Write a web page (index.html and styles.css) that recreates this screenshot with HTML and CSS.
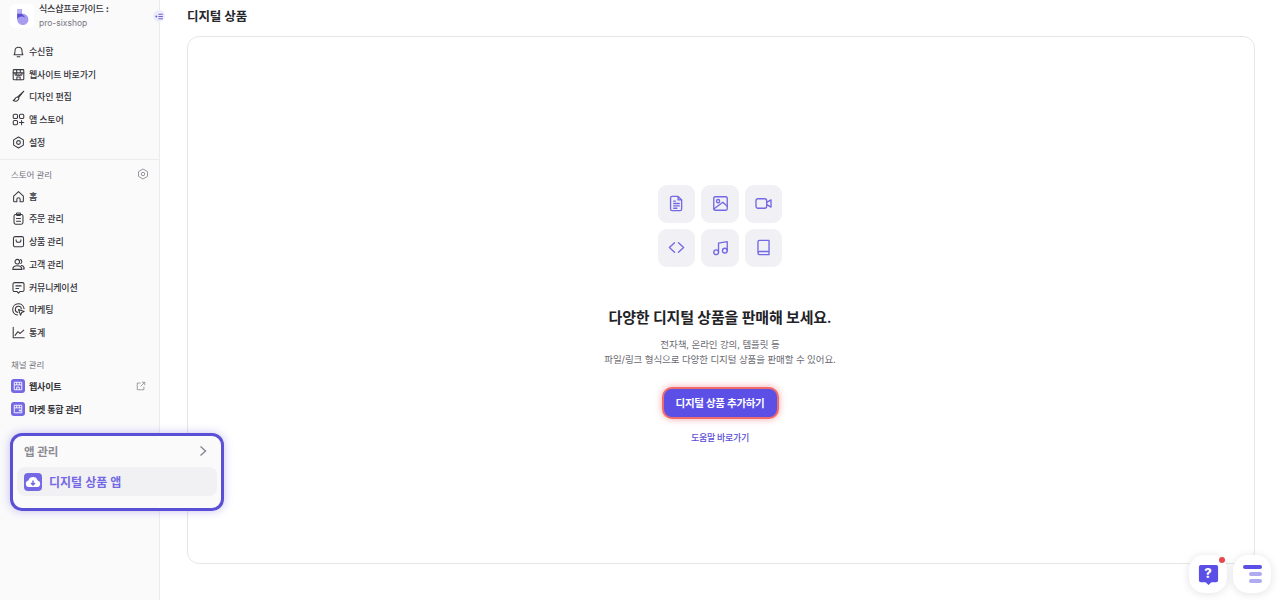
FILE: index.html
```html
<!DOCTYPE html>
<html lang="ko">
<head>
<meta charset="utf-8">
<title>디지털 상품</title>
<link rel="stylesheet" href="styles.css">
</head>
<body>
<div class="app">
  <aside class="sidebar">
    <div class="account">
      <div class="logo">
        <svg viewBox="0 0 16 16" width="17" height="17"><path d="M3 1h4.500v4.500a5.300 5.300 0 1 1-4.500 5z" fill="#a79cf0"/><path d="M3 1h4v4.500H3z" fill="#b9b2f3"/><path d="M3 5.500h4.500L11 9.500a5.300 5.300 0 0 0-8 .8z" fill="#5b4fd6"/></svg>
      </div>
      <div class="account-text">
        <div class="account-name">식스샵프로가이드 <span class="dots">:</span></div>
        <div class="account-id">pro-sixshop</div>
      </div>
      <span class="collapse">
        <svg viewBox="0 0 12 12" width="9" height="9"><path d="M4.500 3h6M4.500 6h6M4.500 9h6" stroke="#5b4fd6" stroke-width="1.200" fill="none"/><circle cx="1.800" cy="6" r="1.200" fill="#5b4fd6"/></svg>
      </span>
    </div>

    <nav class="nav nav-top">
      <a class="item"><svg class="ico" viewBox="0 0 16 16"><path d="M2.500 12c1-1 1.200-3 1.200-5a4.300 4.300 0 0 1 8.600 0c0 2 .2 4 1.200 5zM6.300 14.500h3.400"/></svg>수신함</a>
      <a class="item"><svg class="ico" viewBox="0 0 16 16"><rect x="1.500" y="2" width="13" height="12.500" rx="1"/><path d="M1.500 6h13M5.800 2v4M10.200 2v4M3.800 6v2a1 1 0 0 0 2 0V6M5.800 8a1 1 0 0 0 2.200 0 1 1 0 0 0 2.200 0M10.200 8a1 1 0 0 0 2 0V6M6 14.500v-3.500h4v3.500"/></svg>웹사이트 바로가기</a>
      <a class="item"><svg class="ico" viewBox="0 0 16 16"><path d="M14.500 1.500 7 8.500 8 9.500zM6.500 8.500c-2.500 0-2 3-5 4.500 3 1.500 6.500 1 7-3z"/></svg>디자인 편집</a>
      <a class="item"><svg class="ico" viewBox="0 0 16 16"><rect x="1.500" y="1.500" width="5.300" height="5.300" rx="1.500"/><rect x="9.200" y="1.500" width="5.300" height="5.300" rx="1.500"/><rect x="1.500" y="9.200" width="5.300" height="5.300" rx="1.500"/><path d="M11.800 9.200v5.300M9.200 11.800h5.300"/></svg>앱 스토어</a>
      <a class="item"><svg class="ico" viewBox="0 0 16 16"><path d="M8 1.300 14 4.800v6.400l-6 3.500-6-3.500V4.800z"/><circle cx="8" cy="8" r="2.300"/></svg>설정</a>
    </nav>

    <div class="section-head">
      <span>스토어 관리</span>
      <svg class="gear" viewBox="0 0 16 16"><path d="M8 1.300 14 4.800v6.400l-6 3.500-6-3.500V4.800z"/><circle cx="8" cy="8" r="2.300"/></svg>
    </div>
    <nav class="nav">
      <a class="item"><svg class="ico" viewBox="0 0 16 16"><path d="M2 7.500 8 2l6 5.500v6a1 1 0 0 1-1 1h-3v-3a2 2 0 0 0-4 0v3H3a1 1 0 0 1-1-1z"/></svg>홈</a>
      <a class="item"><svg class="ico" viewBox="0 0 16 16"><rect x="2.500" y="3" width="11" height="12" rx="2"/><rect x="5.500" y="1.200" width="5" height="3.200" rx="1"/><path d="M5.500 8h5M5.500 11.500h5"/></svg>주문 관리</a>
      <a class="item"><svg class="ico" viewBox="0 0 16 16"><rect x="1.800" y="2" width="12.400" height="12.500" rx="2"/><path d="M5 6c0 4 6 4 6 0"/></svg>상품 관리</a>
      <a class="item"><svg class="ico" viewBox="0 0 16 16"><circle cx="6.500" cy="4.500" r="2.800"/><path d="M1 14c0-1 0-4.500 5.500-4.500S12 13 12 14zM10.500 2c2 .3 2 4 .3 4.800M11.500 9.300c2 .2 3.500 1.700 3.500 4.200h-1.500"/></svg>고객 관리</a>
      <a class="item"><svg class="ico" viewBox="0 0 16 16"><path d="M3 2h10a1.800 1.800 0 0 1 1.800 1.800v7.400A1.800 1.800 0 0 1 13 13H9.800L8 15l-1.800-2H3a1.800 1.800 0 0 1-1.800-1.800V3.800A1.800 1.800 0 0 1 3 2zM4.800 6h6.400M4.800 9.300h3.400"/></svg>커뮤니케이션</a>
      <a class="item"><svg class="ico" viewBox="0 0 16 16"><path d="M14.800 7A7 7 0 1 0 7 14.800M11.600 7.200a3.800 3.800 0 1 0-4.400 4.400M8 8l7 2.400-3 1.400L10.500 15z"/></svg>마케팅</a>
      <a class="item"><svg class="ico" viewBox="0 0 16 16"><path d="M1.500 1.500v13H15M3.800 11.500l3.400-4.500 2.800 2.200L14.500 5"/></svg>통계</a>
    </nav>

    <div class="section-head channel"><span>채널 관리</span></div>
    <nav class="nav">
      <a class="item chan"><span class="chan-ico"><svg viewBox="0 0 16 16"><path d="M3 3h10v10H3zM3 6.500h10M6.300 3v3.500M9.700 3v3.500M6.300 13V9.500h3.400V13"/></svg></span>웹사이트<svg class="ext" viewBox="0 0 12 12"><path d="M9.500 6.800V10.500h-8v-8h3.800M7 1.500h3.500V5M10.500 1.500 5.500 6.500"/></svg></a>
      <a class="item chan"><span class="chan-ico"><svg viewBox="0 0 16 16"><path d="M3 3h10v10H3zM3 6.500h10M6.300 3v3.500M9.700 3v3.500M10.500 8.500v3M9 10h3"/></svg></span>마켓 통합 관리</a>
    </nav>

    <div class="app-popup">
      <div class="popup-head"><span>앱 관리</span><svg viewBox="0 0 12 12" width="12" height="12"><path d="M3.500 1.500 8.500 6l-5 4.500" fill="none" stroke="#8b8b93" stroke-width="1.500"/></svg></div>
      <div class="popup-item">
        <span class="cloud"><svg viewBox="0 0 18 18" width="18" height="18"><path d="M4.800 14a3.300 3.300 0 0 1-.4-6.500 4.800 4.800 0 0 1 9.200 0 3.300 3.300 0 0 1-.4 6.500z" fill="#fff"/><path d="M9 7.500v4M7 10l2 2 2-2" fill="none" stroke="#7468e4" stroke-width="1.500"/></svg></span>
        <span>디지털 상품 앱</span>
      </div>
    </div>
  </aside>

  <main class="main">
    <h1 class="title">디지털 상품</h1>
    <section class="card">
      <div class="tiles">
        <div class="tile"><svg viewBox="0 0 24 24"><path d="M6.500 3h7.500l4.500 4.500V19a2 2 0 0 1-2 2h-10a2 2 0 0 1-2-2V5a2 2 0 0 1 2-2zM14 3v4.500h4.500M8.500 12h7M8.500 15h7M8.500 18h4M8.500 9h2"/></svg></div>
        <div class="tile"><svg viewBox="0 0 24 24"><rect x="3.500" y="3.500" width="17" height="17" rx="2"/><circle cx="9" cy="9" r="2"/><path d="M3.500 19 15 10.500l5.500 5"/></svg></div>
        <div class="tile"><svg viewBox="0 0 24 24"><rect x="2.500" y="6" width="13.500" height="12" rx="2.500"/><path d="m16 10.500 5.500-3v9L16 13.500"/></svg></div>
        <div class="tile"><svg viewBox="0 0 24 24"><path d="M9.500 6 3 12l6.500 6M14.500 6 21 12l-6.500 6"/></svg></div>
        <div class="tile"><svg viewBox="0 0 24 24"><circle cx="6.500" cy="18" r="3"/><circle cx="17.500" cy="16" r="3"/><path d="M9.500 18V6.500l11-2V16"/></svg></div>
        <div class="tile"><svg viewBox="0 0 24 24"><path d="M5 18V5a2 2 0 0 1 2-2h12v18H7a2 2 0 0 1-2-2 2 2 0 0 1 2-2h12"/></svg></div>
      </div>
      <h2 class="headline">다양한 디지털 상품을 판매해 보세요.</h2>
      <p class="desc">전자책, 온라인 강의, 템플릿 등<br>파일/링크 형식으로 다양한 디지털 상품을 판매할 수 있어요.</p>
      <button class="cta">디지털 상품 추가하기</button>
      <a class="help">도움말 바로가기</a>
    </section>
  </main>

  <div class="floats">
    <div class="fab">
      <i class="dot"></i>
      <svg class="bubble" viewBox="0 0 24 24" width="23" height="23"><path d="M4 2h16a2 2 0 0 1 2 2v14a2 2 0 0 1-2 2h-5l-3 3-3-3H4a2 2 0 0 1-2-2V4a2 2 0 0 1 2-2z" fill="#5b4fe6"/></svg>
      <span class="q">?</span>
    </div>
    <div class="fab lines"><i class="l1"></i><i class="l2"></i><i class="l3"></i></div>
  </div>
</div>
</body>
</html>
```
FILE: styles.css
```css
* { box-sizing: border-box; }
html, body { margin: 0; height: 100%; }
body {
  font-family: Inter, "Noto Sans CJK KR", "Noto Sans", sans-serif;
  color: #26262b;
  background: #fff;
  overflow: hidden;
}
.app { position: relative; display: flex; width: 1280px; height: 600px; overflow: hidden; }

.sidebar {
  position: relative;
  width: 160px;
  flex: none;
  height: 600px;
  background: #fafafb;
  border-right: 1px solid #ececf0;
  padding-top: 3px;
}
.account { display: flex; align-items: center; height: 26px; padding-left: 10px; }
.logo {
  width: 24px; height: 24px; border-radius: 5px; background: #fff;
  display: flex; align-items: center; justify-content: center; flex: none;
}
.account-text { margin-left: 5px; width: 115px; }
.account-name { font-size: 9px; font-weight: 500; letter-spacing: -.2px; line-height: 12px; color: #33333a; white-space: nowrap; }
.dots { font-weight: 800; }
.account-id { font-size: 8.500px; line-height: 14px; margin-top: 1px; color: #77777f; }
.collapse {
  width: 12px; height: 12px; border-radius: 50%; background: #ededfa;
  position: relative; left: 6px; z-index: 1;
  display: flex; align-items: center; justify-content: center; flex: none;
}
.nav { display: flex; flex-direction: column; }
.nav-top { margin-top: 11px; padding-bottom: 5px; border-bottom: 1px solid #ececf0; }
.item {
  display: flex; align-items: center; height: 22.750px; padding-left: 11.500px;
  font-size: 9px; letter-spacing: -.2px; font-weight: 500; color: #33333a; white-space: nowrap;
}
.ico {
  width: 13px; height: 13px; margin-right: 4.500px; flex: none;
  fill: none; stroke: #3a3a40; stroke-width: 1.300; stroke-linejoin: round; stroke-linecap: round;
}
.section-head {
  display: flex; align-items: center; justify-content: space-between;
  height: 18px; margin-top: 5px; margin-bottom: 2px; padding: 0 10px 0 11px;
  font-size: 8.500px; letter-spacing: -.1px; color: #70707a;
}
.gear { width: 12px; height: 12px; fill: none; stroke: #8b8b93; stroke-width: 1.200; }
.channel { margin-top: 11px; margin-bottom: 2px; }
.chan { font-weight: 600; padding-left: 11px; }
.chan-ico {
  width: 14px; height: 14px; border-radius: 3px; background: #7468e4; margin-right: 4px;
  display: flex; align-items: center; justify-content: center; flex: none;
}
.chan-ico svg { width: 12px; height: 12px; fill: none; stroke: #fff; stroke-width: 1.200; }
.ext { width: 10px; height: 10px; margin-left: auto; margin-right: 13px; fill: none; stroke: #8b8b93; stroke-width: 1; }

.app-popup {
  position: absolute; left: 10px; top: 433px; width: 214px; height: 78px;
  background: #fafafb; border: 3px solid #5b4fd6; border-radius: 12px;
  box-shadow: 0 0 10px rgba(91, 79, 214, .35);
  padding: 0 4px; z-index: 2;
}
.popup-head {
  display: flex; align-items: center; justify-content: space-between;
  height: 29px; margin-bottom: 2px; padding: 0 8px 0 7px; font-size: 11.500px; letter-spacing: -.1px; font-weight: 600; color: #8b8b93;
}
.popup-item {
  display: flex; align-items: center; height: 29px; padding-left: 7px;
  background: #f1f1f4; border-radius: 8px;
  font-size: 12px; font-weight: 600; color: #7468e4;
}
.cloud {
  width: 18px; height: 18px; margin-right: 7px; border-radius: 4px; background: #7468e4;
  display: flex; align-items: center; justify-content: center; flex: none;
}

.main { flex: 1; min-width: 0; padding-left: 27px; padding-right: 25px; }
.title { margin: 0; height: 36px; font-size: 12.500px; letter-spacing: -.1px; font-weight: 600; line-height: 33px; color: #26262b; }
.card {
  height: 528px; border: 1px solid #e6e6ea; border-radius: 12px;
  display: flex; flex-direction: column; align-items: center; padding: 148px 2px 0 0;
}
.tiles { display: grid; grid-template-columns: repeat(3, 37.500px); gap: 6.500px 6px; }
.tile {
  height: 37.500px; background: #f0f0f5; border-radius: 9px;
  display: flex; align-items: center; justify-content: center;
}
.tile svg {
  width: 19px; height: 19px; fill: none; stroke: #7468e4; stroke-width: 1.700;
  stroke-linejoin: round; stroke-linecap: round;
}
.headline { margin: 38px 0 0; font-size: 15px; letter-spacing: -.2px; font-weight: 600; line-height: 25px; color: #222227; }
.desc { margin: 7px 0 0; text-align: center; font-size: 9.500px; letter-spacing: -.1px; line-height: 15px; color: #6b6b73; }
.cta {
  margin-top: 20px; width: 117px; height: 32px;
  background: #5b4fe6; color: #fff; border: 2px solid #f16a6a; border-radius: 10px;
  box-shadow: 0 0 7px rgba(240, 90, 90, .55);
  font: 600 10.500px Inter, "Noto Sans CJK KR", sans-serif; letter-spacing: -.3px;
}
.help { margin-top: 12px; font-size: 9px; letter-spacing: -.3px; font-weight: 500; line-height: 14px; color: #5b4fd6; }

.floats { position: absolute; right: 9px; bottom: 7px; display: flex; gap: 6px; }
.fab {
  position: relative; width: 38px; height: 38px; border-radius: 15px; background: #fff;
  box-shadow: 0 1px 8px rgba(30, 30, 60, .13);
  display: flex; align-items: center; justify-content: center;
}
.dot { position: absolute; right: 2px; top: 2px; width: 6px; height: 6px; border-radius: 50%; background: #e5484d; }
.q { position: absolute; left: 0; right: 0; top: 9px; text-align: center; font-size: 13px; font-weight: 800; color: #fff; line-height: 18px; }
.lines { flex-direction: column; align-items: flex-end; gap: 3px; padding-right: 9.500px; }
.lines i { display: block; height: 4px; border-radius: 2px; }
.l1 { width: 19px; background: #5b4fe6; }
.l2, .l3 { width: 13px; background: #b0aaf0; }
```
